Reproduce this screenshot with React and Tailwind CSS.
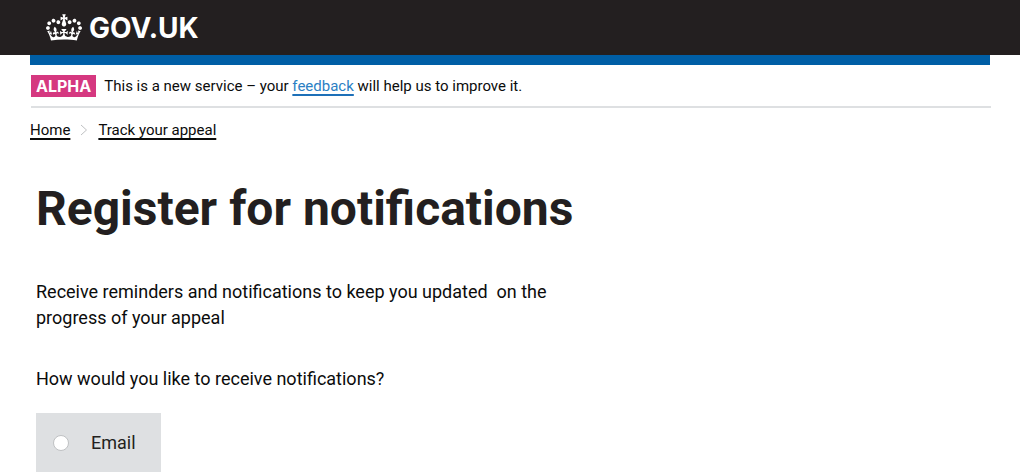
const CROWN =
  "M25 30.2c3.5 1.5 7.7-.2 9.1-3.7 1.5-3.6-.2-7.8-3.9-9.2-3.6-1.4-7.6.3-9.1 3.9-1.4 3.5.3 7.5 3.9 9zM9 39.5c3.6 1.5 7.8-.2 9.2-3.7 1.5-3.6-.2-7.8-3.9-9.1-3.6-1.5-7.6.2-9.1 3.8-1.4 3.5.3 7.5 3.8 9zM4.4 57.2c3.5 1.5 7.7-.2 9.1-3.8 1.5-3.6-.2-7.7-3.9-9.1-3.5-1.5-7.6.3-9.1 3.8-1.4 3.5.3 7.6 3.9 9.1zm38.3-21.4c3.5 1.5 7.7-.2 9.1-3.8 1.5-3.6-.2-7.7-3.9-9.1-3.6-1.5-7.6.3-9.1 3.8-1.3 3.6.4 7.7 3.9 9.1zm64.4-5.6c-3.6 1.5-7.8-.2-9.1-3.7-1.5-3.6.2-7.8 3.8-9.2 3.6-1.4 7.7.3 9.2 3.9 1.3 3.5-.4 7.5-3.9 9zm15.9 9.3c-3.6 1.5-7.7-.2-9.1-3.7-1.5-3.6.2-7.8 3.7-9.1 3.6-1.5 7.7.2 9.2 3.8 1.5 3.5-.3 7.5-3.8 9zm4.7 17.7c-3.6 1.5-7.8-.2-9.2-3.8-1.5-3.6.2-7.7 3.9-9.1 3.6-1.5 7.7.3 9.2 3.8 1.3 3.5-.4 7.6-3.9 9.1zM89.3 35.8c-3.6 1.5-7.8-.2-9.2-3.8-1.4-3.6.2-7.7 3.9-9.1 3.6-1.5 7.7.3 9.2 3.8 1.4 3.6-.3 7.7-3.9 9.1zM69.7 17.7l8.9 4.7V9.3l-8.9 2.8c-.2-.3-.5-.6-.9-.9L72.4 0H59.6l3.5 11.2c-.3.3-.6.5-.9.9l-8.8-2.8v13.1l8.8-4.7c.3.3.6.7.9.9l-5 15.4v.1c-.2.8-.4 1.6-.4 2.4 0 4.1 3.1 7.5 7 8.1h.2c.3 0 .7.1 1 .1.4 0 .7 0 1-.1h.2c4-.6 7.1-4.1 7.1-8.1 0-.8-.1-1.7-.4-2.4V34l-5.1-15.4c.4-.2.7-.6 1-.9zM66 92.8c16.9 0 32.8 1.1 47.1 3.2 4-16.9 8.9-26.7 14-33.5l-9.6-3.4c1 4.9 1.1 7.2 0 10.2-1.5-1.4-3-4.3-4.2-8.7L108.6 76c2.8-2 5-3.2 7.5-3.3-4.4 9.4-10 11.9-13.6 11.2-4.3-.8-6.3-4.6-5.6-7.9 1-4.7 5.7-5.9 8-.5 4.3-8.7-3-11.4-7.6-8.8 7.1-7.2 7.9-13.5 2.1-21.1-8 6.1-8.1 12.3-4.5 20.8-4.7-5.4-12.1-2.5-9.5 6.2 3.4-5.2 7.9-2 7.2 3.1-.6 4.3-6.4 7.8-13.5 7.2-10.3-.9-10.9-8-11.2-13.8 2.5-.5 7.1 1.8 11 7.3L80.2 60c-4.1 4.4-8 5.3-12.3 5.4 1.4-4.4 8-11.6 8-11.6H55.5s6.4 7.2 7.9 11.6c-4.2-.1-8-1-12.3-5.4l1.4 16.4c3.9-5.5 8.5-7.7 10.9-7.3-.3 5.8-.9 12.8-11.1 13.8-7.2.6-12.9-2.9-13.5-7.2-.7-5 3.8-8.3 7.1-3.1 2.7-8.7-4.6-11.6-9.4-6.2 3.7-8.5 3.6-14.7-4.6-20.8-5.8 7.6-5 13.9 2.2 21.1-4.7-2.6-11.9.1-7.7 8.8 2.3-5.5 7.1-4.2 8.1.5.7 3.3-1.3 7.1-5.7 7.9-3.5.7-9-1.8-13.5-11.2 2.5.1 4.7 1.3 7.5 3.3l-4.7-15.4c-1.2 4.4-2.7 7.2-4.3 8.7-1.1-3-.9-5.3 0-10.2l-9.5 3.4c5 6.9 9.9 16.7 14 33.5 14.8-2.1 30.8-3.2 47.7-3.2z";

function Header() {
  return (
    <header className="bg-[#231f20]">
      <div className="mx-[30px] flex h-[55px] items-center px-4">
        <a href="#" className="flex items-center gap-[7px] text-white">
          <svg viewBox="0 0 132 97" className="h-[27px] w-9" fill="currentColor" aria-hidden="true">
            <path d={CROWN} />
          </svg>
          <span className="font-['Inter',sans-serif] text-[28px] leading-8 font-bold">GOV.UK</span>
        </a>
      </div>
    </header>
  );
}

function PhaseBanner() {
  return (
    <div className="ml-px -mr-px flex items-center gap-2 border-b-2 border-[#dee0e2] pt-[10px] pb-[9px]">
      <strong className="bg-[#d53880] px-[5px] font-['Inter',sans-serif] text-base leading-[22px] font-bold text-white">ALPHA</strong>
      <p className="text-[15px] leading-[22px]">
        This is a new service – your{" "}
        <a href="#" className="text-[#2b7fc4] underline decoration-[#1d70b8] decoration-2 underline-offset-3 [text-decoration-skip-ink:none]">feedback</a> will help us to improve it.
      </p>
    </div>
  );
}

function Breadcrumbs() {
  const link = "underline decoration-2 underline-offset-3 [text-decoration-skip-ink:none]";
  return (
    <nav aria-label="Breadcrumb" className="pt-3">
      <ol className="flex items-center text-[15px] leading-5">
        <li>
          <a href="#" className={link}>Home</a>
        </li>
        <li className="flex items-center">
          <svg viewBox="0 0 8 12" className="mx-[10px] h-3 w-2" fill="none" stroke="#bfc1c3" aria-hidden="true">
            <path d="M1 1l5.5 5L1 11" />
          </svg>
          <a href="#" className={link}>Track your appeal</a>
        </li>
      </ol>
    </nav>
  );
}

export default function App() {
  return (
    <div className="bg-white font-['Roboto',sans-serif] text-[#0b0c0c]">
      <Header />
      <div className="mx-[30px]">
        <div className="h-[10px] bg-[#005ea5]" />
        <PhaseBanner />
        <Breadcrumbs />
        <main className="px-[6px] pt-[41px]">
          <h1 className="text-5xl leading-[56px] font-bold text-[#231f20]">Register for notifications</h1>
          <p className="mt-[42px] max-w-[530px] text-lg leading-[26px]">
            Receive reminders and notifications to keep you updated&nbsp; on the progress of your appeal
          </p>
          <fieldset className="pt-[35px]">
            <legend className="float-left w-full text-lg leading-[26px]">How would you like to receive notifications?</legend>
            <div className="clear-both pt-[21px]">
              <label className="flex h-[59px] w-[125px] items-center bg-[#dee0e2] pl-[17px] text-lg text-[#231f20]">
                <input type="radio" name="channel" className="mr-[22px] size-4 appearance-none rounded-full border border-[#bfc1c3] bg-white checked:border-4 checked:border-[#231f20]" />
                Email
              </label>
            </div>
          </fieldset>
        </main>
      </div>
    </div>
  );
}
